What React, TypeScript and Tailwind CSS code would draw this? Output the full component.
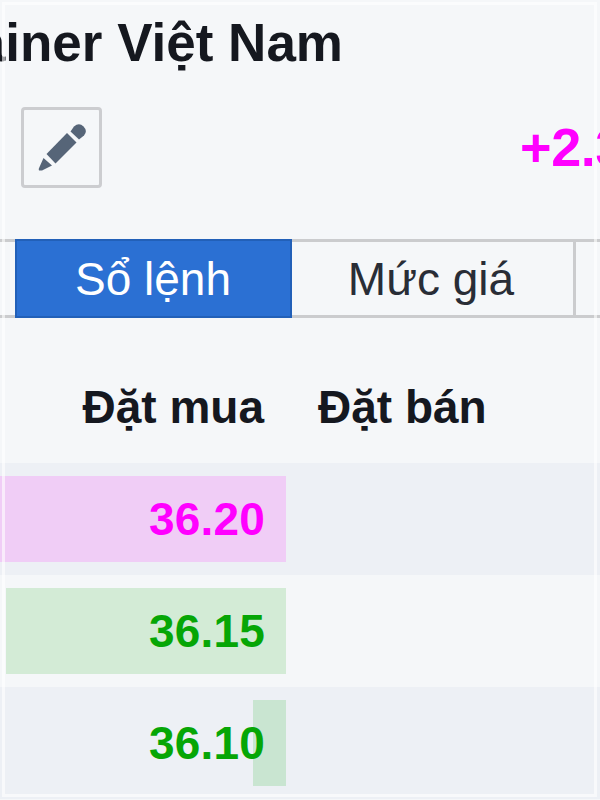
type RowProps = {
    price: string
    row: string
    bar: string
    text: string
}

const rows: RowProps[] = [
    { price: "36.20", row: "bg-[#edf0f5]", bar: "w-[286px] bg-[#f0cdf6]", text: "text-[#ff00ff]" },
    { price: "36.15", row: "bg-[#f5f7f9]", bar: "w-[280px] bg-[#d3ebd6]", text: "text-[#06a606]" },
    { price: "36.10", row: "bg-[#edf0f5]", bar: "w-[33px] bg-[#c9e5d1]", text: "text-[#06a606]" },
]

function Row(props: RowProps) {
    return (
        <li className={`flex h-28 shrink-0 items-center ${props.row}`}>
            <div className="relative flex h-[86px] w-[286px] items-center justify-end">
                <div className={`h-full ${props.bar}`} />
                <span className={`absolute right-[21px] text-[46px] leading-[56px] font-bold tracking-[0.2px] ${props.text}`}>{props.price}</span>
            </div>
        </li>
    )
}

function Pencil() {
    return (
        <svg className="h-[50px] w-[50px] shrink-0" viewBox="0 0 50 50" fill="#566578">
            <path d="M2 47.5 Q1 46.5 2.5 44 L6.5 35 L15 42.5 L5 47.5 Z" />
            <path d="M30 10 L39.5 19.5 L18.5 40.5 L9.5 31 Z" />
            <path d="M33.5 8.5 L37 3.5 Q42 -1 46.5 3.5 Q51 8 47 12.5 L42 16.5 Z" />
        </svg>
    )
}

export default function App() {
    return (
        <main className="relative flex h-[800px] w-[600px] flex-col overflow-hidden bg-[#f5f7f9] font-['Liberation_Sans',Arial,sans-serif] text-[#15181f]">
            <header className="flex h-[84px] shrink-0 justify-start pt-[13px]">
                <h1 className="flex w-[343px] justify-end text-[53px] leading-[60px] font-bold whitespace-nowrap">ainer Việt Nam</h1>
            </header>

            <div className="flex h-[155px] shrink-0 items-start justify-between pt-[23px] pl-[21px]">
                <button className="flex size-[81px] items-center justify-center rounded-[4px] border-3 border-[#cccdd0]">
                    <Pencil />
                </button>
                <span className="mt-[10px] w-[80px] text-[54px] leading-[60px] font-bold tracking-[-0.4px] whitespace-nowrap text-[#ff00ff]">+2.3</span>
            </div>

            <nav className="flex h-[79px] shrink-0 border-y-3 border-[#cbccce] text-[46px] leading-[56px]">
                <div className="w-[15px] shrink-0" />
                <button className="-my-[3px] w-[277px] shrink-0 border-2 border-[#2260b8] bg-[#2b70d3] pr-px text-white">Sổ lệnh</button>
                <button className="w-[284px] shrink-0 border-r-3 border-[#cbccce] pr-[3px] text-[#292d36]">Mức giá</button>
            </nav>

            <div className="flex h-[145px] shrink-0 items-center pt-[33px] text-[46px] leading-[56px] font-bold">
                <div className="w-[286px] pr-[22px] text-right">Đặt mua</div>
                <div className="pl-8">Đặt bán</div>
            </div>

            <ul className="flex flex-col">
                {rows.map(item => (
                    <Row key={item.price} {...item} />
                ))}
            </ul>

            <div className="pointer-events-none absolute top-[2px] right-[3px] bottom-[3px] left-[2px] border-3 border-white/60" />
        </main>
    )
}
